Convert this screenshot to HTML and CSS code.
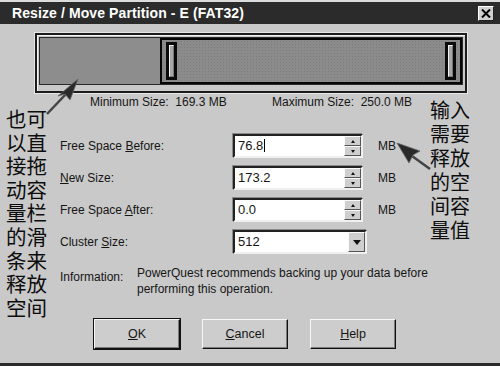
FILE: index.html
```html
<!DOCTYPE html>
<html lang="zh">
<head>
    <meta charset="UTF-8">
    <title>Resize / Move Partition</title>
    <link rel="stylesheet" href="styles.css">
</head>
<body>
<div class="dialog">
    <div class="titlebar">
        <span class="title">Resize / Move Partition - E (FAT32)</span>
        <span class="close_btn">
            <svg width="10" height="9" viewBox="0 0 10 9"><path d="M1 0.5 L9 8.5 M9 0.5 L1 8.5" stroke="#000" stroke-width="2"/></svg>
        </span>
    </div>

    <div class="partmap">
        <div class="bar">
            <div class="free"></div>
            <div class="part">
                <span class="handle"><i></i></span>
                <span class="handle"><i></i></span>
            </div>
        </div>
    </div>

    <div class="sizes">
        <span class="min">Minimum Size:&nbsp;&nbsp;169.3 MB</span>
        <span class="max">Maximum Size:&nbsp;&nbsp;250.0 MB</span>
    </div>

    <div class="form">
        <label class="lbl">Free Space <u>B</u>efore:</label>
        <div class="field">
            <span class="val">76.8<i class="caret"></i></span>
            <span class="spin"><b class="up"></b><b class="down"></b></span>
        </div>
        <span class="unit">MB</span>

        <label class="lbl"><u>N</u>ew Size:</label>
        <div class="field">
            <span class="val">173.2</span>
            <span class="spin"><b class="up"></b><b class="down"></b></span>
        </div>
        <span class="unit">MB</span>

        <label class="lbl">Free Space <u>A</u>fter:</label>
        <div class="field">
            <span class="val">0.0</span>
            <span class="spin"><b class="up"></b><b class="down"></b></span>
        </div>
        <span class="unit">MB</span>

        <label class="lbl">Cluster <u>S</u>ize:</label>
        <div class="field select">
            <span class="val">512</span>
            <span class="drop"></span>
        </div>
        <span class="unit"></span>
    </div>

    <div class="info">
        <span class="lbl">Information:</span>
        <p class="info_txt">PowerQuest recommends backing up your data before<br>performing this operation.</p>
    </div>

    <div class="btn_box">
        <button type="button" class="btn default"><u>O</u>K</button>
        <button type="button" class="btn"><u>C</u>ancel</button>
        <button type="button" class="btn"><u>H</u>elp</button>
    </div>

    <!-- callouts drawn over the screenshot -->
    <p class="note note_left">也可以直接拖动容量栏的滑条来释放空间</p>
    <p class="note note_right">输入需要释放的空间容量值</p>
    <svg class="arrows" width="500" height="366" viewBox="0 0 500 366">
        <path d="M47 114 L66 94" stroke="#444" stroke-width="2.5" fill="none"/>
        <path d="M78 79 L58 96 L65 94 L70 100 Z" fill="#2a2a2a" stroke="#666" stroke-width="0.8"/>
        <path d="M412 156 L430 169" stroke="#444" stroke-width="2.5" fill="none"/>
        <path d="M397 143 L420 151 L413 155 L409 163 Z" fill="#2a2a2a" stroke="#666" stroke-width="0.8"/>
    </svg>
</div>
</body>
</html>
```

FILE: styles.css
```css
body { margin: 0; background: #c9c9c9; }
.dialog { position: relative; width: 500px; height: 366px; box-sizing: border-box; background: #c9c9c9; border-top: 2px solid #dcdcdc; border-bottom: 3px solid #2a2a2a; overflow: hidden; font-family: "Liberation Sans", Arial, sans-serif; font-size: 12px; color: #151515; }

.titlebar { display: flex; align-items: center; justify-content: space-between; height: 22px; padding: 0 6px 0 12px; background: #2b2b2b; }
.title { color: #fff; font-weight: bold; font-size: 14px; letter-spacing: 0.1px; }
.close_btn { display: flex; align-items: center; justify-content: center; width: 16px; height: 15px; box-sizing: border-box; background: #d0d0d0; border: 1px solid; border-color: #fff #222 #222 #fff; }

.partmap { width: 432px; height: 60px; box-sizing: border-box; margin: 9px 0 0 35px; padding: 2px 2px 4px 2px; border: 2px solid #1c1c1c; box-shadow: inset 1px 1px #f4f4f4, 0 0 0 1px #e6e6e6; }
.bar { display: flex; height: 48px; box-sizing: border-box; border: 1px solid #2a2a2a; }
.free { width: 120px; background: #8d8d8d; }
.part { flex: 1; display: flex; justify-content: space-between; padding: 2px 4px; border: 2px solid #050505; background: #8b8b8b; background-image: radial-gradient(#7c7c7c 0.6px, transparent 0.8px); background-size: 3px 3px; }
.handle { display: flex; width: 11px; box-sizing: border-box; padding: 3px 3px; background: #0a0a0a; }
.handle i { flex: 1; border: 1px solid #f2f2f2; border-right-color: #777; border-bottom-color: #777; background: #a8a8a8; }

.sizes { display: flex; margin: 2px 0 0 90px; height: 14px; line-height: 14px; }
.min { width: 182px; }

.form { display: grid; grid-template-columns: 173px 130px 30px; grid-auto-rows: 24px; row-gap: 8px; margin: 25px 0 0 60px; align-items: center; }
.unit { padding-left: 15px; }
.field { display: flex; align-items: stretch; height: 24px; box-sizing: border-box; background: #fff; border: 2px solid; border-color: #222 #f0f0f0 #f0f0f0 #222; box-shadow: -1px -1px #8a8a8a; }
.select { width: 134px; }
.val { flex: 1; padding-left: 3px; line-height: 20px; font-size: 13px; }
.caret { display: inline-block; width: 1px; height: 13px; margin-left: 1px; vertical-align: -2px; background: #000; }
.spin { display: flex; flex-direction: column; width: 17px; }
.spin b, .drop { flex: 1; display: flex; align-items: center; justify-content: center; background: #cfcfcf; border: 1px solid; border-color: #fafafa #555 #555 #fafafa; }
.drop { width: 15px; flex: none; }
.up::after { content: ""; border: 2.5px solid transparent; border-bottom: 3px solid #111; border-top: 0; }
.down::after { content: ""; border: 2.5px solid transparent; border-top: 3px solid #111; border-bottom: 0; }
.drop::after { content: ""; border: 4px solid transparent; border-top: 5px solid #111; border-bottom: 0; margin-top: 1px; }

.info { display: flex; margin: 11px 0 0 60px; line-height: 16px; }
.info .lbl { width: 77px; padding-top: 4px; }
.info_txt { margin: 0; }

.btn_box { display: flex; margin: 22px 0 0 94px; gap: 22px; }
.btn { width: 86px; height: 30px; padding: 0; font-family: inherit; font-size: 12.5px; color: #151515; background: #cdcdcd; border: 1px solid; border-color: #f6f6f6 #111 #111 #f6f6f6; box-shadow: inset -1px -1px #7a7a7a; }
.btn.default { outline: 1px solid #111; }

.note { position: absolute; margin: 0; font-family: "Noto Sans CJK SC", sans-serif; color: #0d0d0d; word-break: break-all; }
.note_left { left: 6px; top: 105px; width: 42px; font-size: 20.5px; line-height: 23.6px; }
.note_right { left: 430px; top: 96px; width: 42px; font-size: 20px; line-height: 24px; }
.arrows { position: absolute; left: 0; top: -2px; pointer-events: none; }
```
